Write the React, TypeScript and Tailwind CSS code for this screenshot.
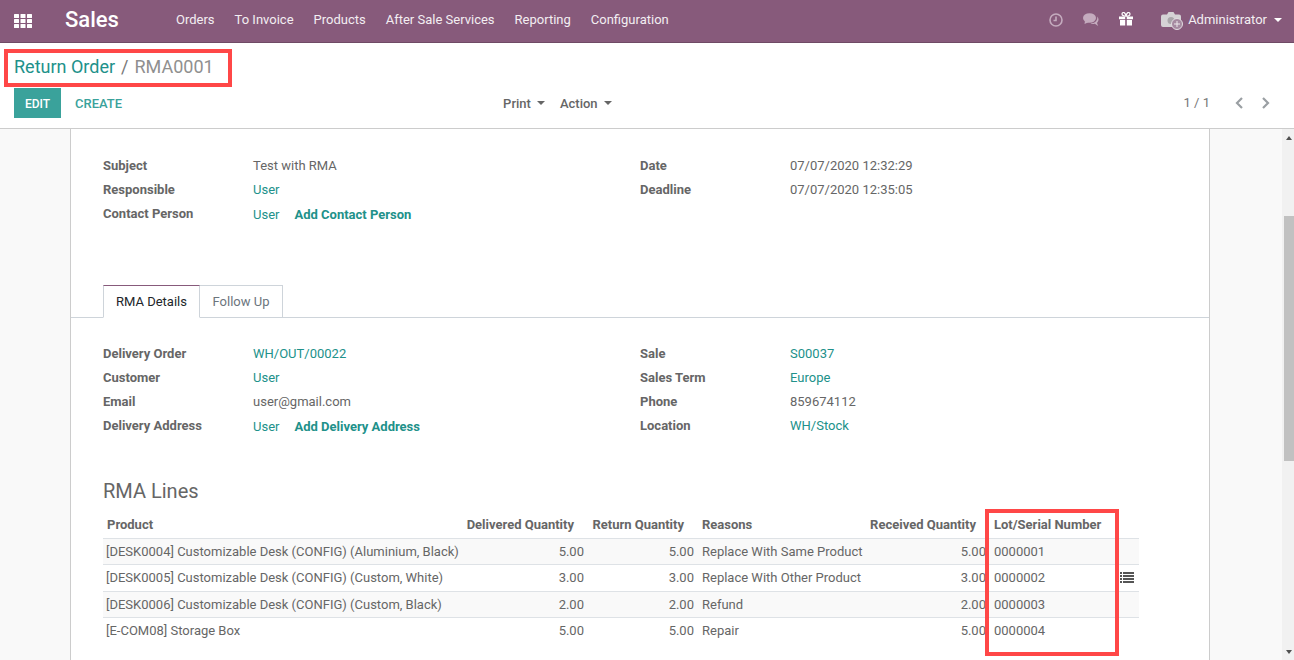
import React from "react";

const Th = ({ children, right }: { children?: React.ReactNode; right?: boolean }) => (
  <th className={`font-bold h-[27px] p-0 ${right ? "text-right pr-[14px]" : "text-left pl-[4px]"}`}>{children}</th>
);

const Field = ({ label, children }: { label: string; children: React.ReactNode }) => (
  <div className="flex h-[24px] items-center">
    <div className="w-[150px] font-bold text-[#666666]">{label}</div>
    <div className="flex items-center">{children}</div>
  </div>
);

const L = ({ children, bold }: { children: React.ReactNode; bold?: boolean }) => (
  <span className={`text-[#21918a] ${bold ? "font-bold" : ""}`}>{children}</span>
);

const rows = [
  ["[DESK0004] Customizable Desk (CONFIG) (Aluminium, Black)", "5.00", "5.00", "Replace With Same Product", "5.00", "0000001", false],
  ["[DESK0005] Customizable Desk (CONFIG) (Custom, White)", "3.00", "3.00", "Replace With Other Product", "3.00", "0000002", true],
  ["[DESK0006] Customizable Desk (CONFIG) (Custom, Black)", "2.00", "2.00", "Refund", "2.00", "0000003", false],
  ["[E-COM08] Storage Box", "5.00", "5.00", "Repair", "5.00", "0000004", false],
] as const;

const menu = ["Orders", "To Invoice", "Products", "After Sale Services", "Reporting", "Configuration"];

export default function App() {
  return (
    <div className="relative h-[660px] w-[1294px] overflow-hidden flex flex-col bg-white text-[13px] text-[#666666] font-['Roboto',sans-serif]">
      {/* navbar */}
      <header className="h-[43px] shrink-0 bg-[#875a7b] border-b border-[#6f4a65] flex items-center text-white">
        <svg className="ml-[14px] w-[18px] h-[14px]" viewBox="0 0 18 14" fill="#fff">
          {[0, 5, 10].flatMap((y) =>
            [0, 6.5, 13].map((x) => <rect key={`${x}-${y}`} x={x} y={y} width="5" height="4" rx="0.5" />)
          )}
        </svg>
        <div className="ml-[33px] text-[22px] font-medium leading-none w-[68px] mb-[2px]">Sales</div>
        <nav className="ml-[43px] flex gap-[20px] text-[#f3eef2] mb-[2px]">
          {menu.map((m) => (
            <span key={m}>{m}</span>
          ))}
        </nav>
        <div className="ml-auto flex items-center mb-[2px]">
          <svg className="w-[14px] h-[14px]" viewBox="0 0 14 14" fill="none" stroke="#c4abbe" strokeWidth="1.6">
            <circle cx="7" cy="7" r="6" />
            <path d="M7 3.5V7.5H4.5" />
          </svg>
          <svg className="ml-[20px] w-[16px] h-[14px]" viewBox="0 0 16 14" fill="#c4abbe">
            <ellipse cx="6.5" cy="5" rx="6.5" ry="4.8" />
            <path d="M2 8 L1.5 11 L6 9Z" />
            <path d="M14.2 3.5C15.6 5 16 7 15 8.6c-.4.6-.7 1-1 1.3l1.2 3-3.4-2.2C10 11.2 8.6 11 7.5 10.4c3.5 0 7.5-2.4 6.7-6.9Z" />
          </svg>
          <svg className="ml-[20px] w-[14px] h-[14px] mb-[2px]" viewBox="0 0 14 14" fill="#fff">
            <path d="M0 4.5h6.2v2.7H0zM7.8 4.5H14v2.7H7.8zM1 8h5.2v5.5H1zM7.8 8H13v5.5H7.8z" />
            <path d="M7 4.2C5 4.2 3 3.4 3 2 3 .6 4.8 0 5.6 1 6.3 1.8 7 3 7 4.2Zm0 0c2 0 4-.8 4-2.2 0-1.4-1.8-2-2.6-1C7.7 1.8 7 3 7 4.2Z" fill="none" stroke="#fff" strokeWidth="1.2" />
          </svg>
          <svg className="ml-[28px] w-[22px] h-[19px]" viewBox="0 0 22 19">
            <path d="M2 3.5h4L7.5 1h5L14 3.5h4a2 2 0 0 1 2 2V14a2 2 0 0 1-2 2H2a2 2 0 0 1-2-2V5.500a2 2 0 0 1 2-2Z" fill="#d5d2d5" />
            <circle cx="10" cy="9.500" r="3.500" fill="#a9a5a9" />
            <circle cx="16" cy="13" r="5.500" fill="#a58aa0" stroke="#e2dde1" strokeWidth="1" />
            <path d="M16 10v6M13 13h6" stroke="#ece8eb" strokeWidth="1" />
          </svg>
          <span className="ml-[5px] text-[#f3eef2]">Administrator</span>
          <span className="ml-[7px] mr-[12px] w-0 h-0 border-x-[4px] border-x-transparent border-t-[4px] border-t-white" />
        </div>
      </header>

      {/* control panel */}
      <section className="h-[86px] shrink-0 border-b border-[#cccccc] px-[14px] flex flex-col">
        <div className="h-[45px] flex items-center text-[18px] leading-none pt-[2px]">
          <span className="text-[#21918a]">Return Order</span>
          <span className="mx-[6px] text-[#777777]">/</span>
          <span className="text-[#8f8f8f]">RMA0001</span>
        </div>
        <div className="flex items-start relative">
          <button className="h-[30px] w-[47px] bg-[#3aa29b] text-white text-[12px] font-medium pt-[1px]">EDIT</button>
          <button className="h-[30px] ml-[14px] text-[#3aa29b] text-[13px] font-medium pt-[2px]">CREATE</button>
          <div className="ml-[381px] h-[30px] flex items-center font-medium text-[#666666] text-[13px] pt-[2px]">
            <span>Print</span>
            <span className="ml-[6px] mb-[3px] w-0 h-0 border-x-[4px] border-x-transparent border-t-[4px] border-t-[#666666]" />
            <span className="ml-[15px]">Action</span>
            <span className="ml-[6px] mb-[3px] w-0 h-0 border-x-[4px] border-x-transparent border-t-[4px] border-t-[#666666]" />
          </div>
          <div className="ml-auto h-[30px] flex items-center text-[#777777]">
            <span>1 / 1</span>
            <svg className="ml-[24px] w-[10px] h-[12px]" viewBox="0 0 10 12" fill="none" stroke="#9a9fa3" strokeWidth="2.200">
              <path d="M8 1 3 6l5 5" />
            </svg>
            <svg className="ml-[17px] mr-[9px] w-[10px] h-[12px]" viewBox="0 0 10 12" fill="none" stroke="#9a9fa3" strokeWidth="2.200">
              <path d="m2 1 5 5-5 5" />
            </svg>
          </div>
        </div>
      </section>

      {/* content */}
      <div className="flex-1 min-h-0 flex bg-[#f9f9f9]">
        <div className="flex-1 min-w-0 pl-[70px] pr-[72px] overflow-hidden">
          <main className="h-full bg-white border-x border-[#cccccc] pt-[25px]">
            <div className="grid grid-cols-[537px_1fr] pl-[32px]">
              <div>
                <Field label="Subject">Test with RMA</Field>
                <Field label="Responsible"><L>User</L></Field>
                <Field label="Contact Person">
                  <span className="mt-[2px] flex"><L>User</L><span className="ml-[15px]"><L bold>Add Contact Person</L></span></span>
                </Field>
              </div>
              <div>
                <Field label="Date">07/07/2020 12:32:29</Field>
                <Field label="Deadline">07/07/2020 12:35:05</Field>
              </div>
            </div>

            {/* tabs */}
            <div className="mt-[59px] h-[33px] border-b border-[#ced4da] pl-[32px] flex items-end">
              <div className="h-[33px] w-[97px] -mb-px bg-white border border-[#ced4da] border-b-white border-t-[#875a7b] text-[#212529] flex items-center justify-center">RMA Details</div>
              <div className="h-[33px] w-[83px] -mb-px border border-l-0 border-[#ced4da] text-[#6c757d] flex items-center justify-center">Follow Up</div>
            </div>

            <div className="grid grid-cols-[537px_1fr] pl-[32px] mt-[24px]">
              <div>
                <Field label="Delivery Order"><L>WH/OUT/00022</L></Field>
                <Field label="Customer"><L>User</L></Field>
                <Field label="Email">user@gmail.com</Field>
                <Field label="Delivery Address">
                  <span className="mt-[2px] flex"><L>User</L><span className="ml-[15px]"><L bold>Add Delivery Address</L></span></span>
                </Field>
              </div>
              <div>
                <Field label="Sale"><L>S00037</L></Field>
                <Field label="Sales Term"><L>Europe</L></Field>
                <Field label="Phone">859674112</Field>
                <Field label="Location"><L>WH/Stock</L></Field>
              </div>
            </div>

            <h2 className="ml-[32px] mt-[39px] h-[28px] flex items-center text-[20px] text-[#666666] leading-none">RMA Lines</h2>

            <table className="ml-[32px] mt-[6px] w-[1036px] table-fixed border-collapse">
              <colgroup>
                <col className="w-[360px]" />
                <col className="w-[125px]" />
                <col className="w-[110px]" />
                <col className="w-[168px]" />
                <col className="w-[124px]" />
                <col className="w-[126px]" />
                <col className="w-[23px]" />
              </colgroup>
              <thead>
                <tr className="border-b border-[#dee2e6]">
                  <Th>Product</Th>
                  <Th right>Delivered Quantity</Th>
                  <Th right>Return Quantity</Th>
                  <Th>Reasons</Th>
                  <Th right>Received Quantity</Th>
                  <Th>Lot/Serial Number</Th>
                  <Th />
                </tr>
              </thead>
              <tbody>
                {rows.map((r, i) => (
                  <tr key={r[5]} className={`h-[26.500px] border-b border-[#dee2e6] last:border-b-0 ${i % 2 === 0 ? "bg-[#f9f9f9]" : "bg-white"}`}>
                    <td className="p-0 pl-[3px] whitespace-nowrap">{r[0]}</td>
                    <td className="p-0 pr-[4px] text-right">{r[1]}</td>
                    <td className="p-0 pr-[4px] text-right">{r[2]}</td>
                    <td className="p-0 pl-[4px] whitespace-nowrap">{r[3]}</td>
                    <td className="p-0 pr-[4px] text-right">{r[4]}</td>
                    <td className="p-0 pl-[4px]">{r[5]}</td>
                    <td className="p-0 pl-[4px]">
                      {r[6] && (
                        <svg className="w-[14px] h-[11px] block" viewBox="0 0 14 11" fill="#555555">
                          {[0, 3, 6, 9].map((y) => (
                            <g key={y}>
                              <rect x="0" y={y} width="2" height="2" />
                              <rect x="3" y={y} width="11" height="2" />
                            </g>
                          ))}
                        </svg>
                      )}
                    </td>
                  </tr>
                ))}
              </tbody>
            </table>
          </main>
        </div>

        {/* scrollbar */}
        <div className="w-[12px] shrink-0 bg-[#f1f1f1] flex flex-col items-end">
          <div className="h-[17px] w-[10px] flex items-center justify-center">
            <span className="w-0 h-0 border-x-[3.500px] border-x-transparent border-b-[4px] border-b-[#505050]" />
          </div>
          <div className="mt-[70px] h-[245px] w-[10px] bg-[#c1c1c1]" />
          <div className="mt-auto h-[17px] w-[10px] flex items-center justify-center">
            <span className="w-0 h-0 border-x-[3.500px] border-x-transparent border-t-[4px] border-t-[#505050]" />
          </div>
        </div>
      </div>

      {/* annotations */}
      <div className="absolute left-[4px] top-[49px] w-[228px] h-[38px] border-[4px] border-[#ff4747] pointer-events-none" />
      <div className="absolute left-[985px] top-[509px] w-[134px] h-[147px] border-[4px] border-[#ff4747] pointer-events-none" />
    </div>
  );
}
